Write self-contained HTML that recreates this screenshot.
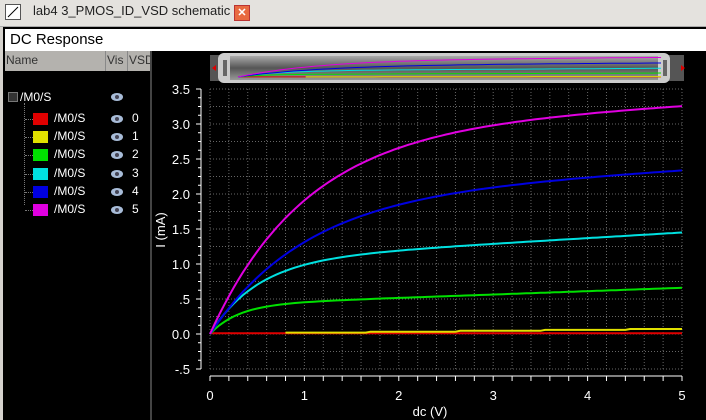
<!DOCTYPE html>
<html><head><style>
body{margin:0;width:706px;height:420px;overflow:hidden;background:#d6d3ce;font-family:"Liberation Sans",sans-serif;position:relative}
.a{position:absolute}
.t{color:#fff;font-size:12px}
</style></head><body>
<div class="a" style="left:0;top:0;width:706px;height:26px;background:#e4e2de;border-bottom:1px solid #aaa"></div>
<div class="a" style="left:5px;top:4px;width:14px;height:14px;background:#fff;border:1px solid #555"><svg width="14" height="14"><line x1="2" y1="12" x2="12" y2="2" stroke="#000"/></svg></div>
<div class="a" style="left:33px;top:3px;font-size:13px;color:#222">lab4 3_PMOS_ID_VSD schematic</div>
<div class="a" style="left:234px;top:5px;width:14px;height:14px;background:#e86a40;border:1px solid #b33;color:#fff;font-size:11px;line-height:14px;text-align:center;font-weight:bold">✕</div>
<div class="a" style="left:3px;top:27px;width:703px;height:393px;background:#000"></div>
<div class="a" style="left:5px;top:29px;width:701px;height:22px;background:#fff"></div>
<div class="a" style="left:10px;top:31px;font-size:15px;color:#000">DC Response</div>
<div class="a" style="left:5px;top:51px;width:145px;height:20px;background:#b4b2ae"></div>
<div class="a" style="left:6px;top:53px;font-size:12px;color:#333">Name</div>
<div class="a" style="left:105px;top:51px;width:1px;height:20px;background:#888"></div>
<div class="a" style="left:107px;top:53px;font-size:12px;color:#333">Vis</div>
<div class="a" style="left:127px;top:51px;width:1px;height:20px;background:#888"></div>
<div class="a" style="left:129px;top:53px;font-size:12px;color:#333;width:21px;overflow:hidden;white-space:nowrap">VSD</div>
<div class="a" style="left:150px;top:51px;width:2px;height:369px;background:#444"></div>
<div class="a" style="left:8px;top:92px;width:8px;height:8px;border:1px solid #777;background:#333"></div>
<div class="a t" style="left:20px;top:90px">/M0/S</div>
<div class="a" style="left:24px;top:103px;width:0;height:102px;border-left:1px dotted #777"></div>
<div id="L"></div>
<svg class="a" style="left:0;top:0" width="706" height="420" id="S"></svg>
<script>
var L='',cols=['#e00000','#e0e000','#00e000','#00e0e0','#0000e0','#e000e0'];
function eye(x,y){return '<svg class="a" style="left:'+x+'px;top:'+y+'px" width="14" height="10"><ellipse cx="7" cy="5" rx="6" ry="4" fill="#a8bcd8"/><circle cx="7" cy="5" r="2" fill="#445"/></svg>';}
L+=eye(110,92);
for(var i=0;i<6;i++){var y=113+i*18.2;
L+='<div class="a" style="left:25px;top:'+(y+6)+'px;width:8px;border-top:1px dotted #777"></div>';
L+='<div class="a" style="left:33px;top:'+(y)+'px;width:15px;height:12px;background:'+cols[i]+'"></div>';
L+='<div class="a t" style="left:54px;top:'+(y-2)+'px">/M0/S</div>'+eye(110,y+1);
L+='<div class="a t" style="left:132px;top:'+(y-2)+'px">'+i+'</div>';}
document.getElementById('L').innerHTML=L;
var s='',X0=210,XS=94.4,Y0=334,YS=70;
function px(v){return X0+v*XS}function py(i){return Y0-i*YS}
for(var v=0;v<=5.001;v+=0.2){s+='<line x1="'+px(v)+'" y1="89" x2="'+px(v)+'" y2="369" stroke="#666" stroke-dasharray="1,2"/>';
s+='<line x1="'+px(v)+'" y1="376" x2="'+px(v)+'" y2="381" stroke="#fff"/>';}
for(var k=-0.5;k<=3.501;k+=0.25){s+='<line x1="210" y1="'+py(k)+'" x2="682" y2="'+py(k)+'" stroke="#666" stroke-dasharray="1,2"/>';}
for(var k=-0.5;k<=3.501;k+=0.125){s+='<line x1="'+(Math.abs((k*2)%1)<0.01?196:198)+'" y1="'+py(k)+'" x2="201" y2="'+py(k)+'" stroke="#fff"/>';}
s+='<line x1="201" y1="89" x2="201" y2="369" stroke="#fff"/><line x1="210" y1="376" x2="682" y2="376" stroke="#fff"/>';
[3.5,3.0,2.5,2.0,1.5,1.0,.5,0,-.5].forEach(function(k){var t=(k==.5?'.5':k==-.5?'-.5':k.toFixed(1));s+='<text x="190" y="'+(py(k)+5)+'" fill="#fff" font-size="13" text-anchor="end" font-family="Liberation Sans">'+t+'</text>';});
for(var v=0;v<=5;v++)s+='<text x="'+px(v)+'" y="400" fill="#fff" font-size="13" text-anchor="middle" font-family="Liberation Sans">'+v+'</text>';
s+='<text x="430" y="416" fill="#fff" font-size="13" text-anchor="middle" font-family="Liberation Sans">dc (V)</text>';
s+='<text transform="translate(165,230) rotate(-90)" fill="#fff" font-size="13" text-anchor="middle" font-family="Liberation Sans">I (mA)</text>';
var P=[[0,1,0],[0,1,0],[.42,.3,.048],[1.05,.5,.08],[1.95,1.0,.08],[2.9,1.0,.075]];
function f(i,v){if(i==0)return 0.01;if(i==1){return 0.02+Math.floor((v-0.8)/0.9)*0.013;}var p=P[i];return p[0]*(1-Math.exp(-v/p[1]))+p[2]*v}
[0,1,2,3,4,5].forEach(function(i){var st=(i==1?0.8:0);var pts=[];for(var v=st;v<=5.001;v+=0.05)pts.push(px(v).toFixed(1)+','+py(f(i,v)).toFixed(1));
s+='<polyline points="'+pts.join(' ')+'" fill="none" stroke="'+cols[i]+'" stroke-width="2"/>';
var q=[];for(var v=st;v<=5.001;v+=0.1)q.push((238+v*84.6).toFixed(1)+','+(77-f(i,v)*6).toFixed(1));
s+='<polyline points="'+q.join(' ')+'" fill="none" stroke="'+cols[i]+'" stroke-width="1"/>';});
document.getElementById('S').innerHTML='<defs><linearGradient id="g" x1="0" y1="0" x2="0" y2="1"><stop offset="0" stop-color="#aaa"/><stop offset=".5" stop-color="#555"/><stop offset="1" stop-color="#999"/></linearGradient></defs>'+
'<rect x="210" y="55" width="474" height="26" fill="#555"/><rect x="218" y="53" width="452" height="30" rx="6" fill="#ccc"/><rect x="230" y="56" width="428" height="24" fill="url(#g)"/>'+
'<polygon points="212,68 216,65 216,71" fill="#d00"/><polygon points="681,65 685,68 681,71" fill="#d00"/>'+
'<line x1="224" y1="60" x2="224" y2="76" stroke="#000"/><line x1="226" y1="60" x2="226" y2="76" stroke="#000"/><line x1="664" y1="60" x2="664" y2="76" stroke="#000"/><line x1="666" y1="60" x2="666" y2="76" stroke="#000"/>'+s;
</script>
</body></html>
